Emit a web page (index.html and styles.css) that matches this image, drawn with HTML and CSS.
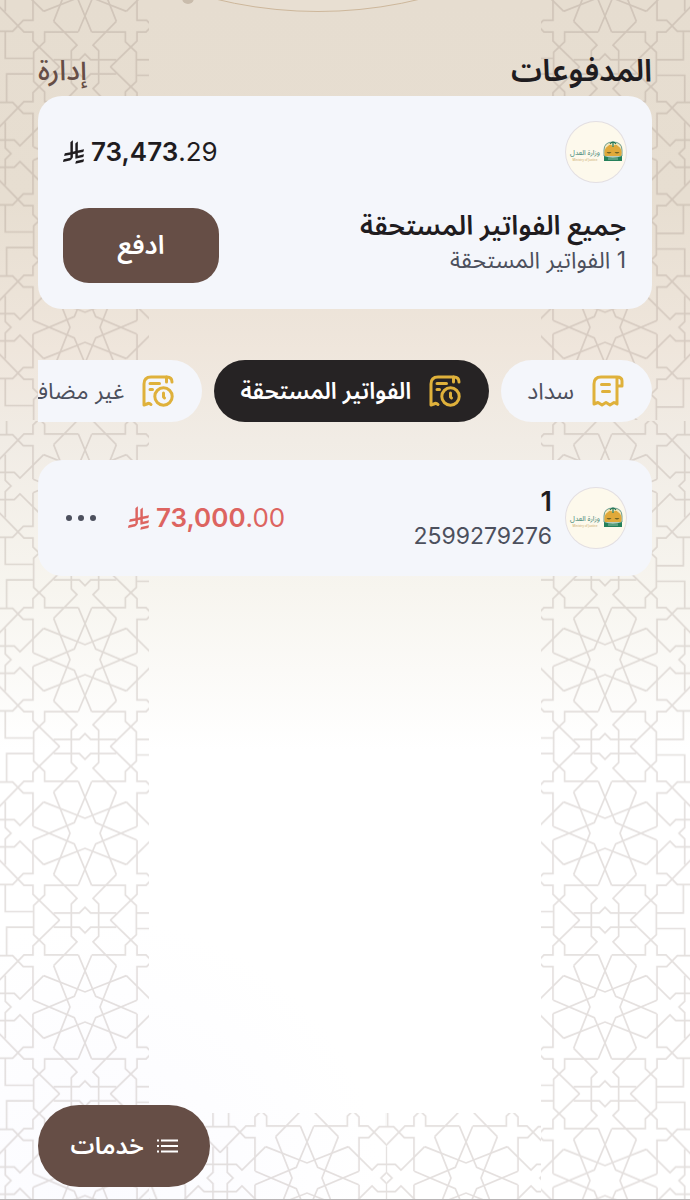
FILE: index.html
```
<!DOCTYPE html>
<html lang="ar" dir="rtl">
<head>
  <meta charset="UTF-8">
  <meta name="viewport" content="width=device-width, initial-scale=1.0">
  <title>المدفوعات</title>
  <link rel="stylesheet" href="styles.css">
</head>
<body>
  <!-- shared shapes -->
  <svg class="defs" width="0" height="0" aria-hidden="true">
    <defs>
      <g id="quarter">
        <path d="M-20-156 32-32 155 20M-94-124-45 0-94 124M-94-124-24-195-41-212V-261M94-124 24-195 41-212V-261"/>
        <path d="M-20-156H-121V-185L-154-217V-261M20-156H121V-185L154-217V-261"/>
        <path d="M-261-76-183-156H-156V-183L-76-261"/>
        <path d="M-94-239H-17L0-222 17-239H94M-154-239H-235V-156"/>
      </g>
      <g id="star" fill="none" stroke="#78605a" stroke-width="5" opacity=".2">
        <use href="#quarter"/>
        <use href="#quarter" transform="rotate(90)"/>
        <use href="#quarter" transform="rotate(180)"/>
        <use href="#quarter" transform="rotate(270)"/>
      </g>
      <pattern id="tile-left" width="521" height="521" patternUnits="userSpaceOnUse" patternTransform="translate(85 65) scale(.3333)" viewBox="-260.5 -260.5 521 521" x="-260.5" y="-260.5"><use href="#star"/></pattern>
      <pattern id="tile-right" href="#tile-left" patternTransform="translate(64 65) scale(.3333)"/>
      <pattern id="tile-left-top" href="#tile-left" patternTransform="translate(85 -20) scale(.3333)"/>
      <pattern id="tile-right-top" href="#tile-left" patternTransform="translate(64 -20) scale(.3333)"/>
      <pattern id="tile-foot-a" href="#tile-left" patternTransform="translate(158 65) scale(.3333)"/>
      <pattern id="tile-foot-b" href="#tile-left" patternTransform="translate(80 65) scale(.3333)"/>

      <symbol id="riyal" viewBox="0 0 1124 1257">
        <path fill="currentColor" d="M699.62 1113.02c-20.06 44.48-33.32 92.75-38.4 143.37l424.51-90.24c20.06-44.47 33.31-92.75 38.4-143.37l-424.51 90.24ZM1085.73 895.8c20.06-44.47 33.32-92.75 38.4-143.37l-330.68 70.33v-135.2l292.27-62.11c20.06-44.47 33.32-92.75 38.4-143.37l-330.68 70.27V66.13c-50.67 28.45-95.67 66.32-132.25 110.99v403.35l-132.25 28.11V0c-50.67 28.44-95.67 66.32-132.25 110.99v525.69l-295.91 62.88c-20.06 44.47-33.33 92.75-38.42 143.37l334.33-71.05v170.26l-358.3 76.14c-20.06 44.47-33.32 92.75-38.4 143.37l375.04-79.7c30.53-6.35 56.77-24.4 73.83-49.24l68.78-101.97c7.14-10.55 11.3-23.27 11.3-36.97v-149.98l132.25-28.11v270.4l424.53-90.28Z"/>
      </symbol>

      <symbol id="bill-due" viewBox="0 0 32 32">
        <g fill="none" stroke="currentColor" stroke-width="3" stroke-linecap="round" stroke-linejoin="round">
          <path d="M9 29.500Q7 27.500 5 29L2 30V9Q2 2 9 2H25Q30 2 30 7"/>
          <path d="M24.500 2V7M8 8.500H17.500M8 14.500H10.500"/>
          <circle cx="21.500" cy="21.500" r="8.700"/>
          <path d="M21.500 18V22L22.500 23"/>
        </g>
      </symbol>

      <symbol id="bill" viewBox="0 0 32 32">
        <g fill="none" stroke="currentColor" stroke-width="3" stroke-linecap="round" stroke-linejoin="round">
          <path d="M25 2H9Q2 2 2 9V29L6 27.500 10 30 14 27.500 18 30 22 27.500 25 29V2Q30 2 30 6V11H25"/>
          <path d="M9.500 9.500H17.500M10.500 16.500H17.500"/>
        </g>
      </symbol>

      <symbol id="ministry" viewBox="0 0 60 60">
        <text x="19" y="33" text-anchor="middle" font-size="7" fill="#3f8575" class="seal-text">وزارة العدل</text>
        <text x="19" y="39" text-anchor="middle" font-size="3" fill="#c9a765" class="seal-text">Ministry of Justice</text>
        <path d="M38 34V28Q38 20 47 20T56 28V34Z" fill="#f3e6bb" stroke="#4b8a83" stroke-width=".8"/>
        <path d="M39 34Q37 27 42 24Q45 21 47 25Q49 21 52 24Q57 27 55 34Z" fill="#e0a93a"/>
        <path d="M47 20V25M44 22Q47 18 50 22" fill="none" stroke="#1d7353" stroke-width="1.200"/>
        <path d="M40.500 30Q43 33 45.500 30ZM48.500 30Q51 33 53.500 30Z" fill="#6f6427"/>
        <path d="M38 34Q47 37 56 34V39H38Z" fill="#25805b"/>
        <path d="M42 37H52" stroke="#a8cdb8" stroke-width=".8"/>
      </symbol>
    </defs>
  </svg>

  <div class="backdrop" aria-hidden="true">
    <svg class="arch" width="240" height="12" viewBox="0 0 240 12">
      <circle cx="8" cy="-2" r="6" fill="#c9bcac"/>
      <circle cx="138" cy="-417.500" r="429" fill="#e8dfd2" stroke="#cdb79b"/>
    </svg>
    <svg class="strip left top"><rect width="100%" height="100%" fill="url(#tile-left-top)"/></svg>
    <svg class="strip right top"><rect width="100%" height="100%" fill="url(#tile-right-top)"/></svg>
    <svg class="strip left rest"><rect width="100%" height="100%" fill="url(#tile-left)"/></svg>
    <svg class="strip right rest"><rect width="100%" height="100%" fill="url(#tile-right)"/></svg>
    <div class="foot">
      <svg class="foot-a"><rect width="100%" height="100%" fill="url(#tile-foot-a)"/></svg>
      <svg class="foot-b"><rect width="100%" height="100%" fill="url(#tile-foot-b)"/></svg>
    </div>
  </div>

  <main>
    <header>
      <h1>المدفوعات</h1>
      <a href="#" class="manage">إدارة</a>
    </header>

    <section class="card summary">
      <div class="row">
        <svg class="seal" role="img" aria-label="وزارة العدل"><use href="#ministry"/></svg>
        <div class="amount" dir="ltr"><svg class="riyal"><use href="#riyal"/></svg><span><b>73,473</b>.29</span></div>
      </div>
      <div class="row">
        <div class="text">
          <h2>جميع الفواتير المستحقة</h2>
          <p>1 الفواتير المستحقة</p>
        </div>
        <button class="pay">ادفع</button>
      </div>
    </section>

    <nav class="tabs">
      <button class="tab"><svg><use href="#bill"/></svg>سداد</button>
      <button class="tab active"><svg><use href="#bill-due"/></svg>الفواتير المستحقة</button>
      <button class="tab"><svg><use href="#bill-due"/></svg>غير مضافة</button>
    </nav>

    <section class="card bill">
      <svg class="seal" role="img" aria-label="وزارة العدل"><use href="#ministry"/></svg>
      <div class="text">
        <h3>1</h3>
        <p>2599279276</p>
      </div>
      <div class="amount due" dir="ltr"><svg class="riyal"><use href="#riyal"/></svg><span><b>73,000</b>.00</span></div>
      <button class="more" aria-label="المزيد">
        <svg width="32" height="8" viewBox="0 0 32 8" fill="currentColor"><circle cx="4" cy="4" r="3"/><circle cx="16" cy="4" r="3"/><circle cx="28" cy="4" r="3"/></svg>
      </button>
    </section>
  </main>

  <button class="services">
    <svg width="22" height="14" viewBox="0 0 22 14" fill="none" stroke="currentColor" stroke-width="2"><path d="M5 1.500H22M5 7H22M5 12.500H22M1 1.500H3M1 7H3M1 12.500H3"/></svg>
    خدمات
  </button>
</body>
</html>
```

FILE: styles.css
```
* {
  box-sizing: border-box;
}

body {
  margin: 0;
  min-height: 100vh;
  position: relative;
  background: linear-gradient(#e6ddd0 0, #e7ded1 200px, #efe6dc 350px, #f1ece5 440px, #f7f5ef 590px, #fff 750px);
  border-bottom: 1px solid #b9b5b6;
  font-family: Inter, "Noto Sans Arabic", "Noto Sans", "DejaVu Sans", sans-serif;
  color: #1f1c1f;
}

h1, h2, h3, p {
  margin: 0;
}

button {
  border: none;
  font-family: inherit;
  cursor: pointer;
}

.defs {
  position: absolute;
}

/* background pattern */
.backdrop {
  position: absolute;
  inset: 0;
  overflow: hidden;
  direction: ltr;
  background: radial-gradient(circle at 15% 100%, #fbfbff 0, transparent 280px);
}

.arch {
  position: absolute;
  top: 0;
  left: 180px;
}

.strip {
  position: absolute;
  width: 149px;
}

.strip.left { left: 0; }
.strip.right { right: 0; }

.strip.top {
  top: 0;
  height: 420px;
}

.strip.rest {
  top: 421px;
  height: calc(100% - 421px);
}

.foot {
  position: absolute;
  bottom: 0;
  left: 149px;
  right: 149px;
  height: 86px;
  display: flex;
}

.foot-a {
  flex: 1;
  min-width: 0;
  height: 100%;
}

.foot-b {
  width: 155px;
  height: 100%;
}

main {
  position: relative;
  padding: 48px 38px 120px;
}

header {
  display: flex;
  justify-content: space-between;
  align-items: center;
  height: 44px;
  margin-bottom: 4px;
}

h1 {
  font-size: 31px;
  font-weight: 600;
  line-height: 44px;
}

.manage {
  font-size: 28px;
  font-weight: 500;
  line-height: 44px;
  color: #664e46;
  text-decoration: none;
}

.card {
  background: #f4f6fb;
  border-radius: 24px;
  padding: 26px;
}

.row {
  display: flex;
  justify-content: space-between;
  align-items: center;
}

.summary {
  padding-left: 25px;
}

.summary .row + .row {
  align-items: flex-start;
  margin-top: 26px;
}

.seal {
  width: 60px;
  height: 60px;
  flex: none;
  border-radius: 50%;
  background: #fdf9ec;
  box-shadow: 0 0 0 1px #e3dfe2;
}

.seal-text {
  font-family: "Noto Sans Arabic", "Noto Sans", sans-serif;
}

.amount {
  display: flex;
  align-items: center;
  gap: 7px;
  font-size: 26px;
  line-height: 32px;
}

.amount b {
  font-weight: 600;
}

.riyal {
  width: 21px;
  height: 24px;
}

h2, h3 {
  font-size: 27px;
  font-weight: 600;
  line-height: 36px;
}

.text p {
  font-size: 23px;
  line-height: 32px;
  color: #4c505d;
}

.pay {
  width: 156px;
  height: 75px;
  border-radius: 26px;
  background: #664e46;
  color: #fff;
  font-size: 26px;
  font-weight: 600;
}

.tabs {
  display: flex;
  gap: 12px;
  margin: 51px 0 38px;
  overflow: hidden;
}

.tab {
  display: flex;
  align-items: center;
  flex: none;
  gap: 18px;
  height: 62px;
  padding: 0 28px 0 26px;
  border-radius: 31px;
  background: #f4f6fb;
  color: #4c505d;
  font-size: 23px;
}

.tab svg {
  width: 32px;
  height: 32px;
  color: #dfb13b;
}

.tab.active {
  background: #262324;
  color: #fff;
  font-weight: 600;
}

.bill {
  display: flex;
  align-items: center;
  height: 116px;
}

.bill .text {
  flex: 1;
  margin-right: 14px;
}

.due {
  color: #dd6460;
}

.more {
  display: flex;
  margin-right: 30px;
  padding: 0 1px;
  background: none;
  color: #4c505d;
}

.services {
  position: fixed;
  left: 38px;
  bottom: 13px;
  display: flex;
  align-items: center;
  justify-content: center;
  gap: 12px;
  width: 172px;
  height: 82px;
  border-radius: 41px;
  background: #664e46;
  color: #fff;
  font-size: 24px;
  font-weight: 600;
}
```
